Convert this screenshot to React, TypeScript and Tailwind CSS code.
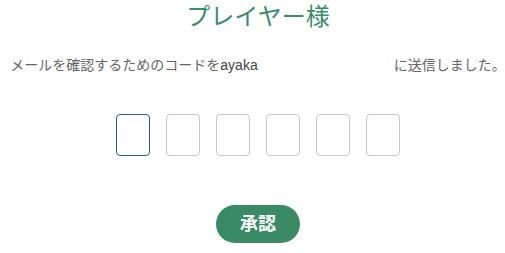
import { useState } from "react";

const FONT = "font-['Liberation_Sans','Noto_Sans_CJK_JP',sans-serif]";

export default function App() {
  const [code] = useState(["", "", "", "", "", ""]);

  return (
    <div className={`${FONT} min-h-screen bg-white flex flex-col items-center pl-[11px]`}>
      <h1 className="mt-[1px] text-[24px] leading-[32px] font-normal text-[#3d8b6e]">プレイヤー様</h1>

      <p className="mt-[22px] text-[14px] leading-[20px] text-[#666] whitespace-nowrap flex items-center">
        <span>メールを確認するためのコードを</span>
        <span className="text-[#444]">ayaka</span>
        <span className="inline-block w-[136px]" />
        <span>に送信しました。</span>
      </p>

      <div className="mt-[39px] flex gap-[16px]">
        {code.map((v, i) => (
          <input
            key={i}
            value={v}
            readOnly
            maxLength={1}
            className={`w-[34px] h-[42px] rounded-[4px] border bg-white text-center outline-none ${
              i === 0 ? "border-[#2f5f6a]" : "border-[#c8c8c8]"
            }`}
          />
        ))}
      </div>

      <button className="mt-[49px] w-[84px] h-[38px] rounded-full bg-[#3a8a66] text-white text-[18px] font-bold">
        承認
      </button>
    </div>
  );
}
